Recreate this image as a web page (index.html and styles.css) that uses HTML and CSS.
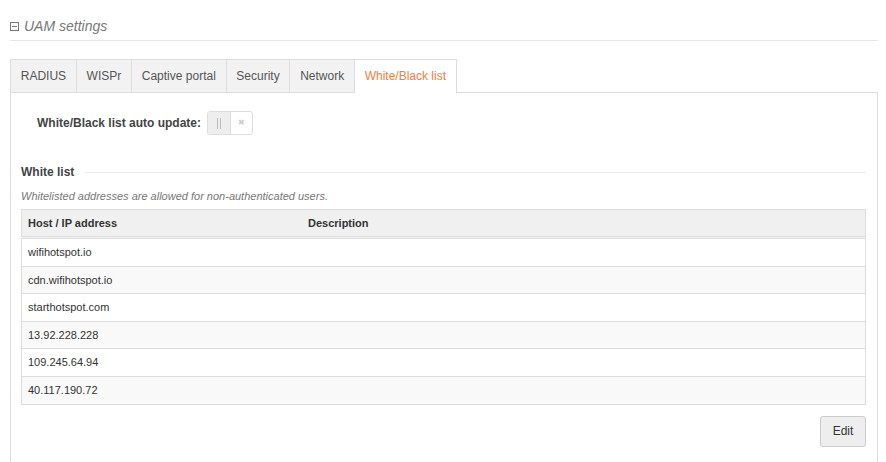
FILE: index.html
```html
<!DOCTYPE html>
<html lang="en">
<head>
  <meta charset="UTF-8">
  <title>UAM settings</title>
  <link rel="stylesheet" href="styles.css">
</head>
<body>

  <div class="page">
    <h2 class="section-title">
      <svg class="collapse-icon" width="9" height="9" viewBox="0 0 9 9">
        <rect x="0.5" y="0.5" width="8" height="8" fill="none" stroke="#777" />
        <line x1="2" y1="4.5" x2="7" y2="4.5" stroke="#777" />
      </svg>
      UAM settings
    </h2>

    <ul class="tabs">
      <li class="tab">RADIUS</li>
      <li class="tab">WISPr</li>
      <li class="tab">Captive portal</li>
      <li class="tab">Security</li>
      <li class="tab">Network</li>
      <li class="tab active">White/Black list</li>
    </ul>

    <div class="tab-panel">
      <div class="field-row">
        <label class="field-label">White/Black list auto update:</label>
        <span class="switch">
          <span class="switch-handle"><i></i><i></i></span>
          <span class="switch-off">&#x2716;</span>
        </span>
      </div>

      <div class="legend">White list</div>
      <p class="hint">Whitelisted addresses are allowed for non-authenticated users.</p>

      <table class="list-table">
        <thead>
          <tr>
            <th class="col-host">Host / IP address</th>
            <th>Description</th>
          </tr>
        </thead>
        <tbody>
          <tr><td>wifihotspot.io</td><td></td></tr>
          <tr><td>cdn.wifihotspot.io</td><td></td></tr>
          <tr><td>starthotspot.com</td><td></td></tr>
          <tr><td>13.92.228.228</td><td></td></tr>
          <tr><td>109.245.64.94</td><td></td></tr>
          <tr><td>40.117.190.72</td><td></td></tr>
        </tbody>
      </table>

      <div class="actions">
        <button class="btn">Edit</button>
      </div>
    </div>
  </div>

</body>
</html>
```

FILE: styles.css
```css
body {
  margin: 0;
  background: #fff;
  font-family: "Liberation Sans", Arial, sans-serif;
  color: #333;
  overflow: hidden;
}

.page {
  padding: 0 8px 0 10px;
}

.section-title {
  margin: 0;
  padding: 16px 0 4px;
  line-height: 20px;
  font-size: 14px;
  font-weight: normal;
  font-style: italic;
  color: #777;
  border-bottom: 1px solid #e6e6e6;
  display: flex;
  align-items: center;
}

.collapse-icon {
  margin-right: 5px;
}

.tabs {
  list-style: none;
  margin: 18px 0 0;
  padding: 0;
  display: flex;
}

.tab {
  background: #f2f2f2;
  border: 1px solid #ddd;
  border-bottom: none;
  margin-right: -1px;
  padding: 0 9.75px;
  height: 32px;
  line-height: 32px;
  font-size: 12px;
  color: #555;
}

.tab.active {
  background: #fff;
  color: #f0803c;
  height: 33px;
  margin-bottom: -1px;
  position: relative;
}

.tab-panel {
  border: 1px solid #ddd;
  padding: 18px 11px 40px 10px;
}

.field-row {
  display: flex;
  align-items: center;
  padding-left: 16px;
  height: 24px;
}

.field-label {
  font-size: 12px;
  font-weight: bold;
  color: #444;
  margin-right: 6px;
}

.switch {
  display: flex;
  width: 44px;
  height: 22px;
  border: 1px solid #ddd;
  border-radius: 3px;
  overflow: hidden;
}

.switch-handle {
  width: 22px;
  background: #eee;
  border-right: 1px solid #ddd;
  display: flex;
  justify-content: center;
  align-items: center;
  gap: 2px;
}

.switch-handle i {
  width: 1px;
  height: 11px;
  background: #bbb;
}

.switch-off {
  flex: 1;
  text-align: center;
  line-height: 22px;
  font-size: 8px;
  color: #ccc;
}

.legend {
  display: flex;
  align-items: center;
  margin-top: 29px;
  line-height: 16px;
  font-size: 12px;
  font-weight: bold;
  color: #444;
}

.legend::after {
  content: "";
  flex: 1;
  border-top: 1px solid #ebebeb;
  margin-left: 11px;
}

.hint {
  margin: 8px 0 5px;
  line-height: 16px;
  font-size: 11px;
  font-style: italic;
  color: #777;
}

.list-table {
  width: 100%;
  border-collapse: collapse;
  border: 1px solid #ddd;
  font-size: 11px;
}

.list-table th {
  background: #f0f0f0;
  text-align: left;
  font-weight: bold;
  color: #333;
  padding: 6px 6px 5px;
  line-height: 15px;
  border-bottom: 3px double #ddd;
}

.list-table .col-host {
  width: 268px;
}

.list-table td {
  padding: 6px 6px 5px;
  line-height: 15.6px;
  border-bottom: 1px solid #ddd;
  color: #333;
}

.list-table tbody tr:nth-child(even) td {
  background: #f9f9f9;
}

.actions {
  display: flex;
  justify-content: flex-end;
  margin-top: 11px;
}

.btn {
  width: 46px;
  height: 31px;
  background: #eee;
  border: 1px solid #ccc;
  border-radius: 3px;
  font-family: "Liberation Sans", Arial, sans-serif;
  font-size: 12px;
  color: #333;
  padding: 0;
}
```
